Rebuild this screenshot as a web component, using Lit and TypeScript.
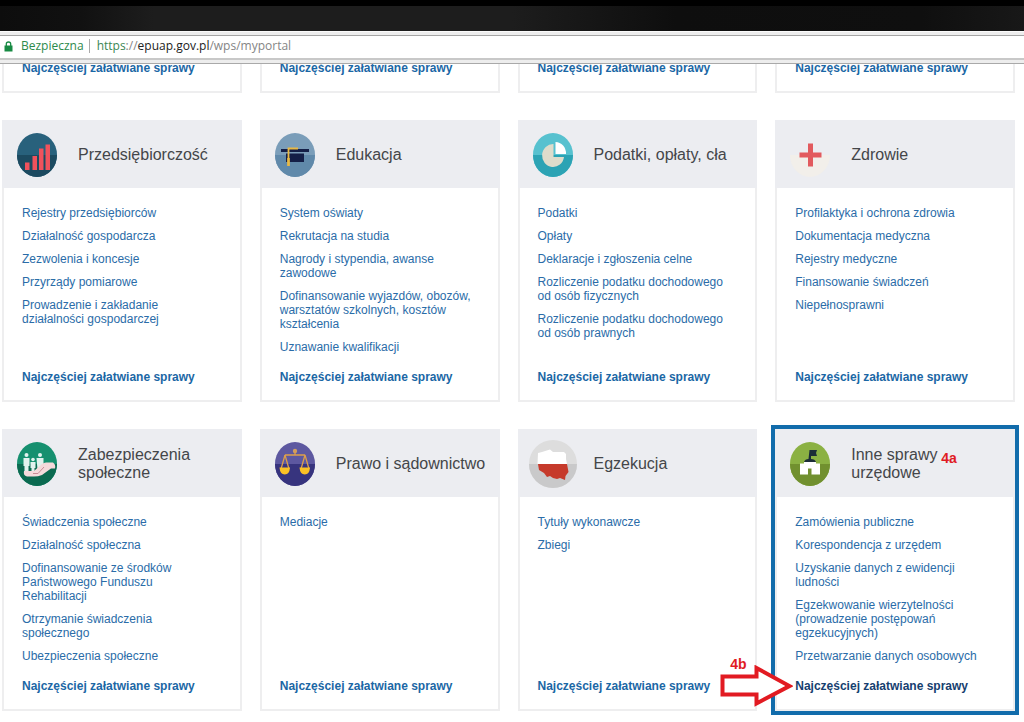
import { LitElement, html, svg, css, nothing, TemplateResult } from "lit";
import { customElement, property } from "lit/decorators.js";

interface Category {
  title: string;
  icon: string;
  links: string[];
  marked?: boolean;
}

const POPULAR = "Najczęściej załatwiane sprawy";

const categories: Category[] = [
  {
    title: "Przedsiębiorczość",
    icon: "business",
    links: [
      "Rejestry przedsiębiorców",
      "Działalność gospodarcza",
      "Zezwolenia i koncesje",
      "Przyrządy pomiarowe",
      "Prowadzenie i zakładanie działalności gospodarczej",
    ],
  },
  {
    title: "Edukacja",
    icon: "education",
    links: [
      "System oświaty",
      "Rekrutacja na studia",
      "Nagrody i stypendia, awanse zawodowe",
      "Dofinansowanie wyjazdów, obozów, warsztatów szkolnych, kosztów kształcenia",
      "Uznawanie kwalifikacji",
    ],
  },
  {
    title: "Podatki, opłaty, cła",
    icon: "taxes",
    links: [
      "Podatki",
      "Opłaty",
      "Deklaracje i zgłoszenia celne",
      "Rozliczenie podatku dochodowego od osób fizycznych",
      "Rozliczenie podatku dochodowego od osób prawnych",
    ],
  },
  {
    title: "Zdrowie",
    icon: "health",
    links: [
      "Profilaktyka i ochrona zdrowia",
      "Dokumentacja medyczna",
      "Rejestry medyczne",
      "Finansowanie świadczeń",
      "Niepełnosprawni",
    ],
  },
  {
    title: "Zabezpieczenia społeczne",
    icon: "social",
    links: [
      "Świadczenia społeczne",
      "Działalność społeczna",
      "Dofinansowanie ze środków Państwowego Funduszu Rehabilitacji",
      "Otrzymanie świadczenia społecznego",
      "Ubezpieczenia społeczne",
    ],
  },
  { title: "Prawo i sądownictwo", icon: "law", links: ["Mediacje"] },
  { title: "Egzekucja", icon: "enforcement", links: ["Tytuły wykonawcze", "Zbiegi"] },
  {
    title: "Inne sprawy urzędowe",
    icon: "other",
    marked: true,
    links: [
      "Zamówienia publiczne",
      "Korespondencja z urzędem",
      "Uzyskanie danych z ewidencji ludności",
      "Egzekwowanie wierzytelności (prowadzenie postępowań egzekucyjnych)",
      "Przetwarzanie danych osobowych",
    ],
  },
];

// Two-tone oval badge: upper half in one colour, lower half in another.
const badge = (top: string, bottom: string) => svg`
  <ellipse cx="24" cy="24" rx="20" ry="22" fill=${top} />
  <path d="M4 24a20 22 0 0 0 40 0z" fill=${bottom} />`;

const icons: Record<string, TemplateResult> = {
  business: svg`${badge("#28617c", "#1c4a60")}
    <path d="M12 31.500h4.500v7.500h-4.500zM19.500 25h4.500v14h-4.500zM26 17.500h4.500v21.500h-4.500zM32.500 13.500h4.500v25.500h-4.500z" fill="#f0525c" />`,
  education: svg`${badge("#7a9db9", "#6089aa")}
    <path d="M10 18h28v3h-28zM15 22.500h18v8.500h-18z" fill="#141f47" />
    <path d="M27 17.500h-9.500v17" fill="none" stroke="#e9b945" stroke-width="1.800" />
    <path d="M17.500 27v8" stroke="#e9b945" stroke-width="2.600" />`,
  taxes: svg`${badge("#57c1cf", "#2ca3b4")}
    <path d="M24.500 13a11 11.500 0 1 0 10.500 13h-10.500z" fill="#dedccb" />
    <path d="M26.500 11a10.500 11.500 0 0 1 10.500 12h-10.500z" fill="#fff" />`,
  health: svg`
    <path d="M4 24a20 22 0 0 0 40 0z" fill="#f2efea" />
    <path d="M22 12.500h5v9h8.500v5h-8.500v9h-5v-9h-8.500v-5h8.500z" fill="#e25a5e" />`,
  social: svg`${badge("#16906f", "#0b6a50")}
    <g fill="#e2f2ee">
      <circle cx="13.500" cy="15" r="2" /><path d="M10.500 18h6v8h-1v6h-4v-6h-1z" />
      <circle cx="20" cy="19.500" r="1.800" /><path d="M17.500 22h5v6h-1v4h-3v-4h-1z" />
      <circle cx="27" cy="15" r="2" /><path d="M23.500 18h7v7l-4 5h-2z" />
    </g>
    <path d="M11 31h10l8-7q2-1.500 4-1.500h7q3 2 2 6h-4l-9 6.500q-4 1.500-8 1.500h-7q-4-1-3-5.500z" fill="#f5dadb" />
    <path d="M20 33.500h5l6-6.500" fill="none" stroke="#c98d96" stroke-width="1" />`,
  law: svg`${badge("#5d58a0", "#37347e")}
    <circle cx="24" cy="11" r="2.200" fill="#cf9e64" />
    <path d="M24 10v5M14 15h20M14 15l-4 14M14 15l4 14M34 15l-4 14M34 15l4 14" fill="none" stroke="#dc9e4c" stroke-width="1.300" />
    <path d="M8.500 27.500h10.500q-.5 7-5.200 7t-5.300-7zM28.500 27.500h10.500q-.5 7-5.200 7t-5.300-7z" fill="#fbc126" />`,
  enforcement: svg`
    <circle cx="24" cy="24" r="24" fill="#dddddd" />
    <path d="M0 24a24 24 0 0 0 48 0z" fill="#c9c9ca" />
    <path d="M8.500 24l.5-11 4-1 8-2.500 3 2.500h11l2 2v5l1 5z" fill="#fff" />
    <path d="M9 24h29l1.500 8-3 4-.5 4-5-2-3 1-4-1-3-2-3 1-3-4-5-3z" fill="#c63a2b" />`,
  other: svg`${badge("#8bb143", "#71902f")}
    <path d="M23.500 10h7.500l-1 3 1 3h-6v3q4 0 5 3h-12q1-3 4.500-3z" fill="#1c2d38" />
    <path d="M14 23.500h4v-1.500h12v1.500h4v11h-8.500v-6h-3.500v6h-8z" fill="#fff" />`,
};

@customElement("category-card")
class CategoryCard extends LitElement {
  static styles = css`
    :host {
      display: flex;
      flex-direction: column;
      position: relative;
      min-width: 0;
    }
    :host([marked]) {
      outline: 4px solid #126cab;
    }
    .head {
      box-sizing: border-box;
      display: flex;
      align-items: center;
      gap: 17px;
      height: 68px;
      padding: 2px 8px 0 11px;
      background: #ecedf1;
    }
    .icon {
      flex: none;
      width: 48px;
      height: 48px;
    }
    h2 {
      margin: 0;
      font-size: 16px;
      font-weight: 400;
      line-height: 18px;
      color: #444649;
    }
    .body {
      flex: 1;
      display: flex;
      flex-direction: column;
      gap: 16px;
      padding: 18px 22px 16px 18px;
      border: 2px solid #eeeeef;
      border-top: 0;
    }
    ul {
      display: flex;
      flex-direction: column;
      gap: 9px;
      margin: 0;
      padding: 0;
      list-style: none;
      line-height: 14px;
    }
    a {
      display: block;
      color: #2a6ca8;
      text-decoration: none;
    }
    .popular {
      margin-top: auto;
      font-weight: 700;
      line-height: 14px;
      color: #1b67a5;
    }
    :host([marked]) .popular {
      color: #16406f;
    }
  `;

  @property({ attribute: false }) category?: Category;

  render() {
    const c = this.category;
    return html`
      ${c
        ? html`<header class="head">
            <svg class="icon" viewBox="0 0 48 48" aria-hidden="true">${icons[c.icon]}</svg>
            <h2>${c.title}</h2>
          </header>`
        : nothing}
      <div class="body">
        ${c
          ? html`<ul>
              ${c.links.map((l) => html`<li><a href="#">${l}</a></li>`)}
            </ul>`
          : nothing}
        <a class="popular" href="#">${POPULAR}</a>
      </div>
      <slot></slot>
    `;
  }
}

@customElement("app-root")
class AppRoot extends LitElement {
  static styles = css`
    :host {
      display: block;
      min-height: 100vh;
      overflow: hidden;
      background: #fff;
      font-family: "Liberation Sans", Arial, sans-serif;
      font-size: 12px;
    }
    .titlebar {
      height: 25px;
      border-top: 6px solid #000;
      background: linear-gradient(90deg, #0d0d0d, #111 8%, #1d1d1d 15%, #1d1d1d 50%, #0e0e0e 66%, #0f0f0f 90%, #181818);
    }
    .toolbar {
      padding: 3px 0;
      background: #ededed;
      border-top: 1px solid #fafafa;
      border-bottom: 1px solid #a9a9a9;
    }
    .address {
      box-sizing: border-box;
      display: flex;
      align-items: center;
      gap: 7px;
      height: 25px;
      padding: 0 4px 2px;
      background: #fff;
      border-top: 1px solid #a5a5a5;
      border-bottom: 2px solid #c8c8c8;
      font-family: "Open Sans", "Noto Sans", sans-serif;
      font-size: 12px;
      line-height: 14px;
      color: #858585;
    }
    .secure {
      display: flex;
      align-items: center;
      gap: 8px;
      padding: 0 5px 0 0;
      border: 0;
      border-right: 1px solid #aaa;
      background: none;
      font: inherit;
      color: #2d8a4b;
    }
    .lock {
      width: 9px;
      height: 11px;
    }
    .scheme {
      color: #3b8754;
    }
    .host {
      color: #222;
    }
    .grid {
      display: grid;
      grid-template-columns: repeat(4, minmax(0, 1fr));
      column-gap: 18px;
      row-gap: 27px;
      padding: 0 9px 10px 2px;
    }
    .scrolled {
      height: 29px;
      overflow: hidden;
      align-items: end;
      align-content: end;
      padding-bottom: 0;
      margin-bottom: 27px;
    }
    .note {
      position: absolute;
      font-size: 14px;
      font-weight: 700;
      line-height: 16px;
      color: #e01b24;
    }
    .note-a {
      left: 166px;
      top: 21px;
    }
    .note-b {
      left: -45px;
      bottom: 39px;
    }
    .arrow {
      position: absolute;
      left: -56px;
      bottom: 4px;
      width: 74px;
      height: 42px;
    }
  `;

  render() {
    return html`
      <div class="titlebar"></div>
      <div class="toolbar">
        <div class="address">
          <button class="secure" type="button">
            <svg class="lock" viewBox="0 0 9 11" aria-hidden="true">
              <path d="M.500 4.500h8v6h-8z" fill="#178a43" />
              <path d="M2.300 5v-2a2.200 2 0 0 1 4.400 0v2" fill="none" stroke="#178a43" stroke-width="1.300" />
            </svg>
            <span>Bezpieczna</span>
          </button>
          <span><span class="scheme">https</span>://<span class="host">epuap.gov.pl</span>/wps/myportal</span>
        </div>
      </div>
      <main>
        <div class="grid scrolled">
          ${[0, 1, 2, 3].map(() => html`<category-card></category-card>`)}
        </div>
        <div class="grid">
          ${categories.map(
            (c) => html`<category-card .category=${c} ?marked=${c.marked}>
              ${c.marked
                ? html`<span class="note note-a">4a</span>
                    <span class="note note-b">4b</span>
                    <svg class="arrow" viewBox="0 0 74 42" aria-hidden="true">
                      <path d="M3.500 11.500h34v-8.500l33 18-33 17.500v-9h-34z" fill="#fff" stroke="#e21b22" stroke-width="4" />
                    </svg>`
                : nothing}
            </category-card>`
          )}
        </div>
      </main>
    `;
  }
}
